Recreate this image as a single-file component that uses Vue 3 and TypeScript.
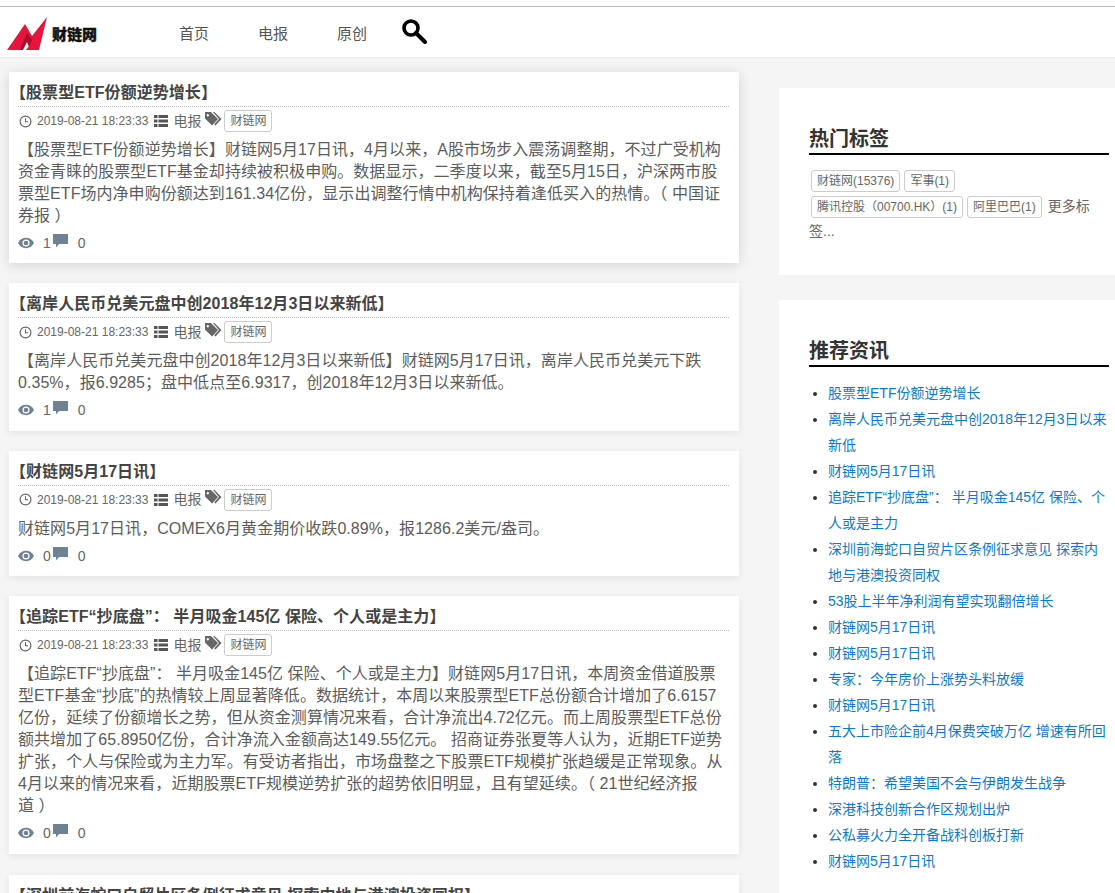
<template>
  <div class="page">
    <header class="topbar">
      <a class="logo">
        <svg width="42" height="34" viewBox="0 0 42 34">
          <polygon points="1,34 19,8 26,20 41,1 33,34 20,34 23,30 21,24 15,34" fill="#e8143c" />
          <polygon points="14,34 21,17 26,24 23,31 21,26 17,34" fill="#a80d2c" />
        </svg>
        <span class="logo_text">财链网</span>
      </a>
      <nav class="nav">
        <a>首页</a>
        <a>电报</a>
        <a>原创</a>
      </nav>
      <svg class="search" width="25" height="25" viewBox="0 0 25 25">
        <circle cx="9" cy="9" r="7" fill="none" stroke="#000" stroke-width="3.600" />
        <line x1="14" y1="14" x2="23" y2="23" stroke="#000" stroke-width="4" stroke-linecap="round" />
      </svg>
    </header>

    <div class="main">
      <div class="left">
        <article v-for="item in articles" :key="item.title" class="card">
          <h2 class="title"><span class="br">【</span>{{ item.title }}<span class="br">】</span></h2>
          <div class="meta">
            <svg class="ic_clock" width="13" height="13" viewBox="0 0 13 13">
              <circle cx="6.500" cy="6.500" r="5.400" fill="none" stroke="#666" stroke-width="1.200" />
              <path d="M6.500 3.200v3.500h2.600" fill="none" stroke="#666" stroke-width="1.100" />
            </svg>
            <span class="date">2019-08-21 18:23:33</span>
            <svg class="ic_list" width="14" height="12" viewBox="0 0 14 12">
              <path d="M0 0h3.500v3H0zM4.500 0H14v3H4.500zM0 4.500h3.500v3H0zM4.500 4.500H14v3H4.500zM0 9h3.500v3H0zM4.500 9H14v3H4.500z" fill="#555" />
            </svg>
            <span class="cat">电报</span>
            <svg class="ic_tag" width="17" height="14" viewBox="0 0 17 14">
              <path d="M0 0h6l7 7-6 6.500-7-7z M2.800 2a1.200 1.200 0 1 0 .01 0z" fill="#666" fill-rule="evenodd" />
              <path d="M8 0h1.500l7 7-6 6.500-1.300-1.300L14 7z" fill="#666" />
            </svg>
            <span class="tag">财链网</span>
          </div>
          <p class="body">{{ item.body }}</p>
          <div class="stats">
            <svg width="16" height="12" viewBox="0 0 17 12">
              <path d="M0 6C2 2.200 5 .5 8.500.5S15 2.200 17 6c-2 3.800-5 5.500-8.500 5.500S2 9.800 0 6z" fill="#6f8294" />
              <circle cx="8.500" cy="6" r="3.800" fill="#fff" />
              <circle cx="8.500" cy="6" r="2.500" fill="#6f8294" />
            </svg>
            <span class="num">{{ item.views }}</span>
            <svg class="ic_chat" width="15" height="14" viewBox="0 0 15 14">
              <path d="M0 0h15v10H6l-3 3.500V10H0z" fill="#6f8294" />
            </svg>
            <span class="num2">0</span>
          </div>
        </article>
        <article class="card last">
          <h2 class="title"><span class="br">【</span>深圳前海蛇口自贸片区条例征求意见 探索内地与港澳投资同权<span class="br">】</span></h2>
        </article>
      </div>

      <aside class="right">
        <section class="box box_tags">
          <h3 class="box_title">热门标签</h3>
          <div class="tags">
            <span v-for="t in hotTags" :key="t" class="tag">{{ t }}</span>
            <span class="more">更多标签...</span>
          </div>
        </section>
        <section class="box box_news">
          <h3 class="box_title">推荐资讯</h3>
          <ul class="news">
            <li v-for="(n, i) in news" :key="i"><a>{{ n }}</a></li>
          </ul>
        </section>
      </aside>
    </div>
  </div>
</template>

<script setup lang="ts">
const articles = [
  {
    title: "股票型ETF份额逆势增长",
    body: "【股票型ETF份额逆势增长】财链网5月17日讯，4月以来，A股市场步入震荡调整期，不过广受机构资金青睐的股票型ETF基金却持续被积极申购。数据显示，二季度以来，截至5月15日，沪深两市股票型ETF场内净申购份额达到161.34亿份，显示出调整行情中机构保持着逢低买入的热情。（ 中国证券报\u00a0）",
    views: 1
  },
  {
    title: "离岸人民币兑美元盘中创2018年12月3日以来新低",
    body: "【离岸人民币兑美元盘中创2018年12月3日以来新低】财链网5月17日讯，离岸人民币兑美元下跌0.35%，报6.9285；盘中低点至6.9317，创2018年12月3日以来新低。",
    views: 1
  },
  {
    title: "财链网5月17日讯",
    body: "财链网5月17日讯，COMEX6月黄金期价收跌0.89%，报1286.2美元/盎司。",
    views: 0
  },
  {
    title: "追踪ETF“抄底盘”： 半月吸金145亿 保险、个人或是主力",
    body: "【追踪ETF“抄底盘”： 半月吸金145亿 保险、个人或是主力】财链网5月17日讯，本周资金借道股票型ETF基金“抄底”的热情较上周显著降低。数据统计，本周以来股票型ETF总份额合计增加了6.6157亿份，延续了份额增长之势，但从资金测算情况来看，合计净流出4.72亿元。而上周股票型ETF总份额共增加了65.8950亿份，合计净流入金额高达149.55亿元。 招商证券张夏等人认为，近期ETF逆势扩张，个人与保险或为主力军。有受访者指出，市场盘整之下股票ETF规模扩张趋缓是正常现象。从4月以来的情况来看，近期股票ETF规模逆势扩张的超势依旧明显，且有望延续。（ 21世纪经济报道\u00a0）",
    views: 0
  }
]

const hotTags = ["财链网(15376)", "军事(1)", "腾讯控股（00700.HK）(1)", "阿里巴巴(1)"]

const news = [
  "股票型ETF份额逆势增长",
  "离岸人民币兑美元盘中创2018年12月3日以来新低",
  "财链网5月17日讯",
  "追踪ETF“抄底盘”： 半月吸金145亿 保险、个人或是主力",
  "深圳前海蛇口自贸片区条例征求意见 探索内地与港澳投资同权",
  "53股上半年净利润有望实现翻倍增长",
  "财链网5月17日讯",
  "财链网5月17日讯",
  "专家：今年房价上涨势头料放缓",
  "财链网5月17日讯",
  "五大上市险企前4月保费突破万亿 增速有所回落",
  "特朗普：希望美国不会与伊朗发生战争",
  "深港科技创新合作区规划出炉",
  "公私募火力全开备战科创板打新",
  "财链网5月17日讯"
]
</script>

<style scoped>
.page {
  height: 893px;
  overflow: hidden;
  background: #f5f5f5;
  font-family: "Liberation Sans", "Noto Sans CJK SC", sans-serif;
  color: #555;
}

.topbar {
  height: 50px;
  margin-top: 6px;
  border-top: 1px solid #bbb;
  border-bottom: 1px solid #eee;
  background: #fff;
  display: flex;
  align-items: center;
  box-shadow: 0 -6px 0 #fff;
}

.logo {
  display: flex;
  align-items: center;
  width: 179px;
  padding: 2px 0 0 6px;
  box-sizing: border-box;
}

.logo_text {
  font-size: 15px;
  font-weight: 900;
  color: #111;
  margin-left: 4px;
  margin-top: 1px;
  -webkit-text-stroke: 0.3px #111;
}

.nav {
  display: flex;
  gap: 49px;
  font-size: 15px;
  color: #555;
}

.search {
  margin-left: 35px;
  margin-top: -2px;
}

.main {
  display: flex;
  width: 1115px;
  overflow: hidden;
}

.left {
  width: 730px;
  margin-left: 9px;
  padding-top: 14px;
  flex-shrink: 0;
}

.card {
  background: #fff;
  padding: 8px 10px 8.4px 9px;
  margin-bottom: 20px;
  box-shadow: 0 2px 8px rgba(0, 0, 0, 0.08);
}

.card:first-child {
  box-shadow: 0 2px 12px rgba(0, 0, 0, 0.14);
}

.title {
  margin: 0;
  font-size: 16px;
  line-height: 26px;
  font-weight: 700;
  letter-spacing: 0.05px;
  color: #444;
  border-bottom: 1px dotted #bbb;
}

.br {
  font-feature-settings: "halt";
}

.meta {
  display: flex;
  align-items: center;
  height: 28px;
  font-size: 12px;
  color: #666;
}

.ic_clock {
  margin: 0 5px 0 1px;
}

.date {
  margin-right: 6px;
}

.cat {
  font-size: 14px;
  margin: -3px 4px 0 5px;
}

.ic_tag {
  margin: -5px 2px 0 0;
}

.tag {
  display: inline-block;
  border: 1px solid #ccc;
  border-radius: 3px;
  font-size: 12px;
  line-height: 20px;
  padding: 0 5px;
  color: #666;
  background: #fff;
}

.body {
  margin: 4px 5px 0 0;
  font-size: 16px;
  line-height: 22px;
  letter-spacing: 0.05px;
  color: #5c5c5c;
}

.stats {
  display: flex;
  align-items: center;
  height: 24px;
  margin-top: 4px;
  font-size: 14px;
  color: #666;
}

.num {
  margin-left: 9px;
}

.ic_chat {
  margin: -4px 0 0 2px;
}

.num2 {
  margin-left: 10px;
}

.last {
  margin-top: 21.4px;
}

.right {
  margin-left: 40px;
  width: 336px;
  flex-shrink: 0;
  padding-top: 30px;
}

.box {
  background: #fff;
  padding: 37px 0 0 30px;
  margin-bottom: 25px;
  width: 336px;
  box-sizing: border-box;
}

.box_tags {
  height: 187px;
}

.box_news {
  padding-bottom: 60px;
}

.box_title {
  margin: 0;
  width: 300px;
  font-size: 20px;
  line-height: 28px;
  font-weight: 700;
  color: #333;
  border-bottom: 2px solid #000;
}

.tags {
  margin-top: 13px;
  width: 290px;
  font-size: 14px;
  line-height: 25.5px;
}

.tags .tag {
  margin: 0 2px;
}

.more {
  color: #666;
  margin-left: 4px;
}

.news {
  margin: 13px 0 0;
  padding: 0 0 0 19px;
  width: 281px;
  font-size: 14px;
  line-height: 26px;
  color: #333;
}

.news a {
  color: #0b7bc8;
}
</style>

<style>
html, body {
  background: #f5f5f5;
}
</style>
